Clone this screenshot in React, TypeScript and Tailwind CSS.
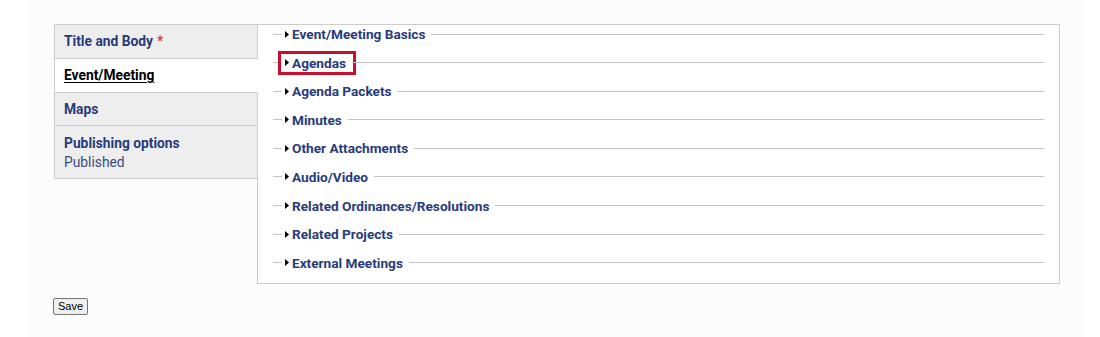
import React from 'react';

const sections = [
  'Event/Meeting Basics',
  'Agendas',
  'Agenda Packets',
  'Minutes',
  'Other Attachments',
  'Audio/Video',
  'Related Ordinances/Resolutions',
  'Related Projects',
  'External Meetings',
];

function Caret() {
  return (
    <svg width="4" height="7" viewBox="0 0 4 7" className="shrink-0">
      <path d="M0 0 L4 3.5 L0 7 Z" fill="#000" />
    </svg>
  );
}

export default function App() {
  return (
    <div className="w-[1100px] h-[337px] bg-white font-['Roboto',sans-serif]">
      <div className="ml-[29px] w-[1055px] h-full bg-[#fcfcfc] pl-[25px] pt-[24px]">
        <div className="flex items-start">
          {/* vertical tabs */}
          <ul className="w-[203px] border-l border-t border-b border-[#cccccc] bg-[#eeeeee] text-[13.8px]">
            <li className="h-[34px] pl-[9px] flex items-center border-b border-[#cccccc] font-bold text-[#283b7b]">
              Title and Body<span className="text-[#e53935] ml-1">*</span>
            </li>
            <li className="h-[34px] pl-[9px] flex items-center border-b border-[#cccccc] bg-white font-bold text-black underline underline-offset-2 mr-[-1px] relative">
              Event/Meeting
            </li>
            <li className="h-[33px] pl-[9px] flex items-center border-b border-[#cccccc] font-bold text-[#283b7b]">
              Maps
            </li>
            <li className="h-[52px] pl-[9px] pt-[8px] leading-[19px]">
              <div className="font-bold text-[#283b7b]">Publishing options</div>
              <div className="text-[#3b4a7e]">Published</div>
            </li>
          </ul>

          {/* details panel */}
          <div className="w-[803px] h-[260px] border border-[#cccccc] bg-white pl-[15px] pr-[15px] flex flex-col gap-[10.6px]">
            {sections.map((s) => (
              <div key={s} className="h-[18px] flex items-center">
                <div className="w-[9px] h-px bg-[#c4c4c4]" />
                <span
                  className={`h-4 flex items-center gap-[3px] pl-[3px] pr-[6px] text-[13.65px] leading-4 font-bold text-[#283b7b] ${
                    s === 'Agendas' ? 'outline-[3px] outline-solid outline-[#c8102e] outline-offset-1' : ''
                  }`}
                >
                  <Caret />
                  {s}
                </span>
                <div className="flex-1 h-px bg-[#c4c4c4]" />
              </div>
            ))}
          </div>
        </div>

        <button className="mt-[14px] ml-[-1px] h-[17px] w-[35px] text-[11px] leading-none font-['Liberation_Sans',sans-serif] text-black bg-[#efefef] border border-[#767676] rounded-[2px]">
          Save
        </button>
      </div>
    </div>
  );
}
